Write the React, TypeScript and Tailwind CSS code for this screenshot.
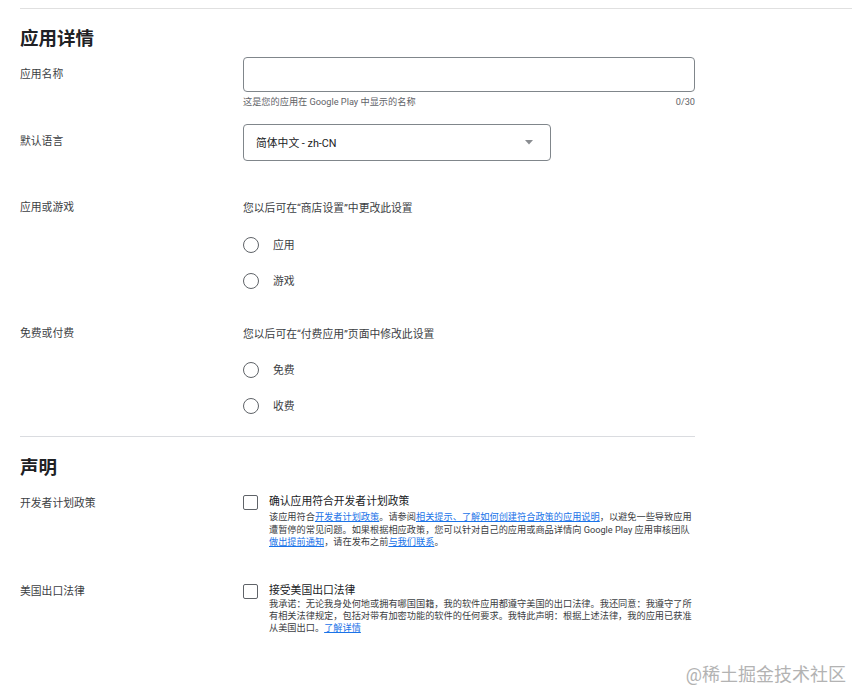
import React from "react";

function Radio({ label }: { label: string }) {
  return (
    <div className="flex h-[36px] items-center">
      <span className="box-border h-[16px] w-[16px] rounded-full border-[1.5px] border-[#5f6368]" />
      <span className="ml-[14px] pt-[1px] text-[10.8px] leading-[14px] text-[#3c4043]">{label}</span>
    </div>
  );
}

function Check() {
  return <span className="mt-[1px] box-border block h-[15px] w-[15px] shrink-0 rounded-[2px] border-[1.5px] border-[#5f6368]" />;
}

function A({ children }: { children: React.ReactNode }) {
  return <span className="text-[#1a73e8] underline underline-offset-[1px]">{children}</span>;
}

export default function App() {
  return (
    <div className="relative h-[692px] w-[852px] overflow-hidden bg-white font-['Roboto','Noto_Sans_CJK_SC',sans-serif] text-[#202124]">
      <div className="ml-[20px] mt-[8px] border-t border-[#e0e0e0]" />
      <div className="ml-[20px] w-[675px]">
        <h2 className="mt-[18px] text-[18.5px] font-bold leading-[24px] text-[#202124]">应用详情</h2>

        {/* 应用名称 */}
        <div className="mt-[6px] grid grid-cols-[223px_452px]">
          <div className="pt-[11px] text-[10.8px] leading-[14px] text-[#3c4043]">应用名称</div>
          <div>
            <div className="box-border h-[35px] rounded-[4px] border border-[#80868b]" />
            <div className="mt-[4px] flex justify-between text-[9.2px] leading-[12px] text-[#5f6368]">
              <span>这是您的应用在 Google Play 中显示的名称</span>
              <span>0/30</span>
            </div>
          </div>
        </div>

        {/* 默认语言 */}
        <div className="mt-[16px] grid grid-cols-[223px_452px]">
          <div className="pt-[11px] text-[10.8px] leading-[14px] text-[#3c4043]">默认语言</div>
          <div>
            <div className="box-border flex h-[37px] w-[308px] items-center justify-between rounded-[4px] border border-[#80868b] pl-[12px] pr-[17px]">
              <span className="pt-[2px] text-[10.8px] leading-[14px] text-[#202124]">简体中文 - zh-CN</span>
              <svg width="8" height="5" viewBox="0 0 8 5">
                <path d="M0 0 L8 0 L4 4.5 Z" fill="#8a8d91" />
              </svg>
            </div>
          </div>
        </div>

        {/* 应用或游戏 */}
        <div className="mt-[41px] grid grid-cols-[223px_452px]">
          <div className="-mt-[1px] text-[10.8px] leading-[14px] text-[#3c4043]">应用或游戏</div>
          <div>
            <div className="text-[10.8px] leading-[14px] text-[#3c4043]">您以后可在“商店设置”中更改此设置</div>
            <div className="mt-[11px]">
              <Radio label="应用" />
              <Radio label="游戏" />
            </div>
          </div>
        </div>

        {/* 免费或付费 */}
        <div className="mt-[29px] grid grid-cols-[223px_452px]">
          <div className="-mt-[1px] text-[10.8px] leading-[14px] text-[#3c4043]">免费或付费</div>
          <div>
            <div className="text-[10.8px] leading-[14px] text-[#3c4043]">您以后可在“付费应用”页面中修改此设置</div>
            <div className="mt-[10px]">
              <Radio label="免费" />
              <Radio label="收费" />
            </div>
          </div>
        </div>

        <div className="mt-[12px] border-t border-[#dadce0]" />

        <h2 className="mt-[19px] text-[18.5px] font-bold leading-[24px] text-[#202124]">声明</h2>

        {/* 开发者计划政策 */}
        <div className="mt-[14px] grid grid-cols-[223px_452px]">
          <div className="pt-[3px] text-[10.8px] leading-[14px] text-[#3c4043]">开发者计划政策</div>
          <div className="flex">
            <Check />
            <div className="ml-[11px] w-[426px]">
              <div className="pt-[1px] text-[10.8px] leading-[14px] text-[#202124]">确认应用符合开发者计划政策</div>
              <div className="mt-[2px] text-[9.2px] leading-[12.5px] text-[#3c4043]">
                <div className="whitespace-nowrap">该应用符合<A>开发者计划政策</A>。请参阅<A>相关提示、了解如何创建符合政策的应用说明</A>，以避免一些导致应用</div>
                <div className="whitespace-nowrap">遭暂停的常见问题。如果根据相应政策，您可以针对自己的应用或商品详情向 Google Play 应用审核团队</div>
                <div className="whitespace-nowrap"><A>做出提前通知</A>，请在发布之前<A>与我们联系</A>。</div>
              </div>
            </div>
          </div>
        </div>

        {/* 美国出口法律 */}
        <div className="mt-[34px] grid grid-cols-[223px_452px]">
          <div className="pt-[2px] text-[10.8px] leading-[14px] text-[#3c4043]">美国出口法律</div>
          <div className="flex">
            <Check />
            <div className="ml-[11px] w-[426px]">
              <div className="pt-[1px] text-[10.8px] leading-[14px] text-[#202124]">接受美国出口法律</div>
              <div className="mt-[0px] text-[9.2px] leading-[12px] text-[#3c4043]">
                <div className="whitespace-nowrap">我承诺：无论我身处何地或拥有哪国国籍，我的软件应用都遵守美国的出口法律。我还同意：我遵守了所</div>
                <div className="whitespace-nowrap">有相关法律规定，包括对带有加密功能的软件的任何要求。我特此声明：根据上述法律，我的应用已获准</div>
                <div className="whitespace-nowrap">从美国出口。<A>了解详情</A></div>
              </div>
            </div>
          </div>
        </div>
      </div>

      <div className="absolute bottom-[5px] right-[6px] text-[18px] leading-[24px] text-[#b3b3b3]">@稀土掘金技术社区</div>
    </div>
  );
}
